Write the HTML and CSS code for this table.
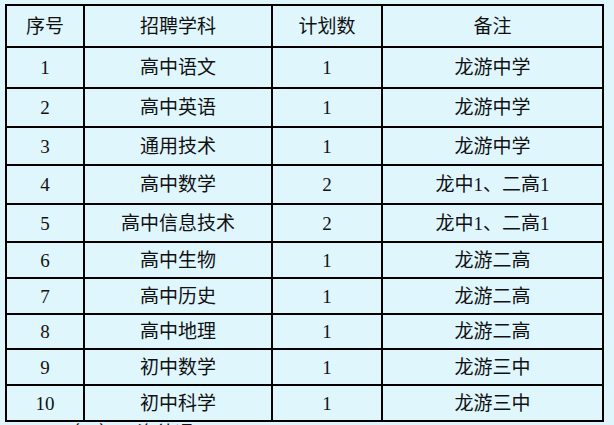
FILE: index.html
```html
<!DOCTYPE html>
<html lang="zh">
<head>
<meta charset="utf-8">
<link rel="stylesheet" href="styles.css">
</head>
<body>
<table class="plan">
  <colgroup>
    <col class="c1"><col class="c2"><col class="c3"><col class="c4">
  </colgroup>
  <tr class="h-head"><td>序号</td><td>招聘学科</td><td>计划数</td><td>备注</td></tr>
  <tr class="h-41"><td>1</td><td>高中语文</td><td>1</td><td>龙游中学</td></tr>
  <tr class="h-39"><td>2</td><td>高中英语</td><td>1</td><td>龙游中学</td></tr>
  <tr class="h-38"><td>3</td><td>通用技术</td><td>1</td><td>龙游中学</td></tr>
  <tr class="h-39"><td>4</td><td>高中数学</td><td>2</td><td>龙中1、二高1</td></tr>
  <tr class="h-38"><td>5</td><td>高中信息技术</td><td>2</td><td>龙中1、二高1</td></tr>
  <tr class="h-36"><td>6</td><td>高中生物</td><td>1</td><td>龙游二高</td></tr>
  <tr class="h-36"><td>7</td><td>高中历史</td><td>1</td><td>龙游二高</td></tr>
  <tr class="h-35"><td>8</td><td>高中地理</td><td>1</td><td>龙游二高</td></tr>
  <tr class="h-36"><td>9</td><td>初中数学</td><td>1</td><td>龙游三中</td></tr>
  <tr class="h-36"><td>10</td><td>初中科学</td><td>1</td><td>龙游三中</td></tr>
</table>
<p class="next">（二）工资待遇</p>
</body>
</html>
```
FILE: styles.css
```css
html, body {
  margin: 0;
  background: #dff6fd;
}
body {
  padding: 4px 0 0 5px;
  font-family: "Liberation Serif", "Noto Sans CJK SC", serif;
  color: #111;
  overflow: hidden;
  height: 425px;
  box-sizing: border-box;
}
.plan {
  border-collapse: collapse;
  table-layout: fixed;
  width: 597px;
  font-size: 19px;
}
.c1 { width: 78px; }
.c2 { width: 188px; }
.c3 { width: 110px; }
.c4 { width: 221px; }
.plan td {
  border: 2px solid #000;
  text-align: center;
  vertical-align: middle;
  padding: 0;
  line-height: 1;
}
.h-head { height: 42px; }
.h-41 { height: 41px; }
.h-39 { height: 39px; }
.h-38 { height: 38px; }
.h-36 { height: 36px; }
.h-35 { height: 35px; }
.next {
  margin: 0;
  padding-left: 56px;
  font-size: 19px;
  line-height: 24px;
  color: #111;
}
```
